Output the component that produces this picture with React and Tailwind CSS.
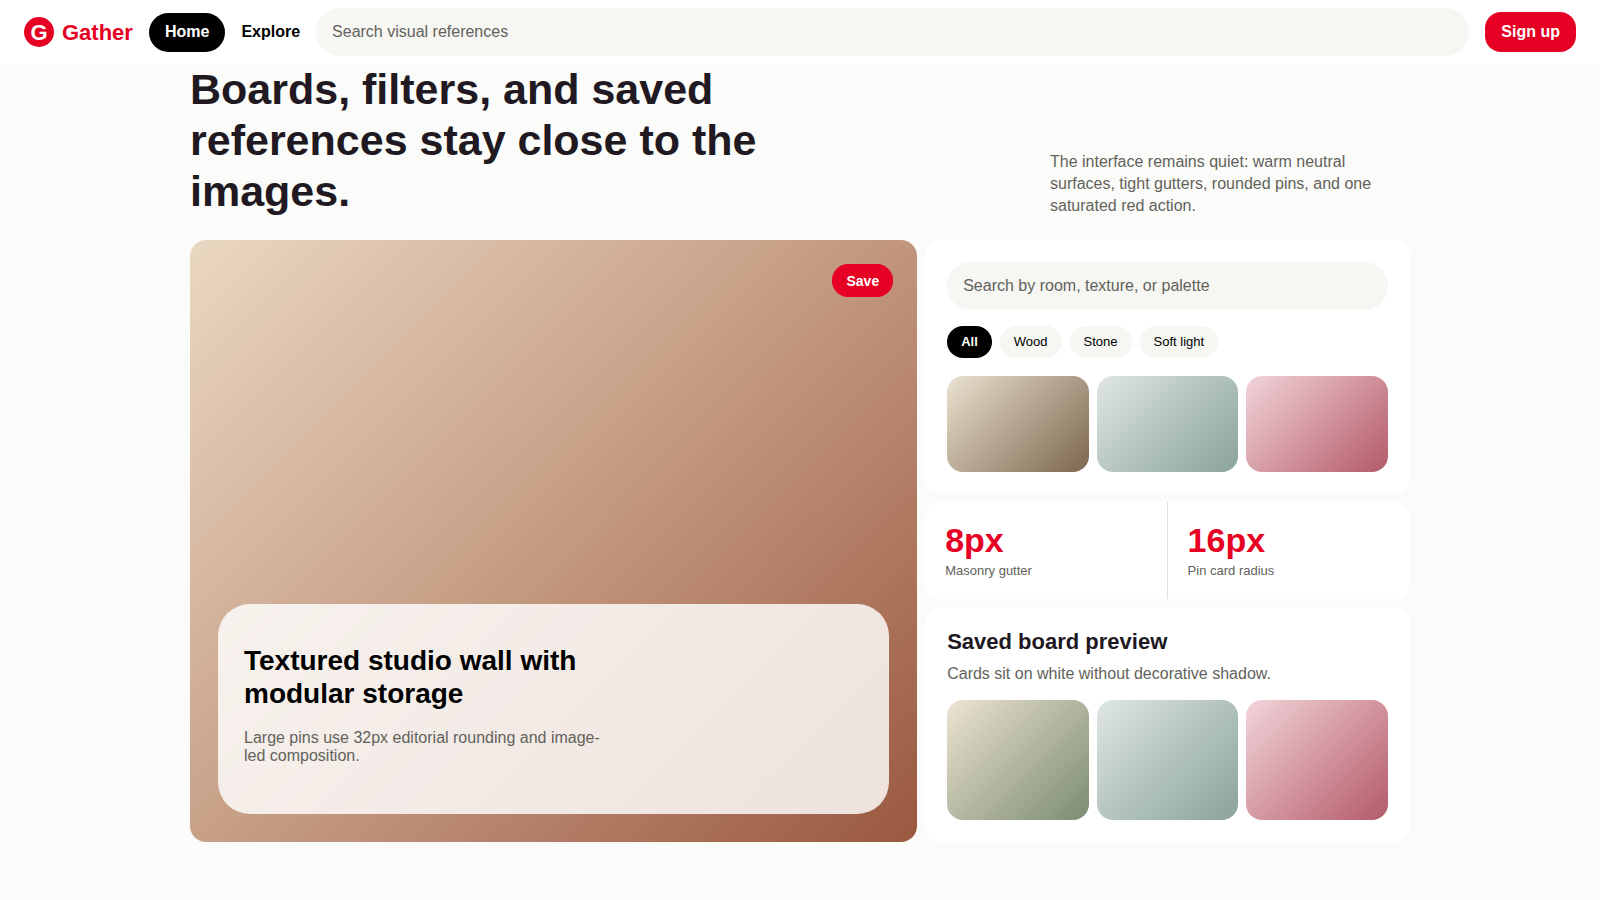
import { useState } from 'react'

const FILTERS = ['All', 'Wood', 'Stone', 'Soft light']

const STATS = [
  { value: '8px', label: 'Masonry gutter' },
  { value: '16px', label: 'Pin card radius' },
]

const PALETTE_PINS = [
  'from-[#ebe3d1] to-[#7d6850]',
  'from-[#dfe6e3] to-[#8aa39b]',
  'from-[#f1d5db] to-[#b25a69]',
]

const BOARD_PINS = [
  'from-[#ede4d3] to-[#7c8c73]',
  'from-[#dfe6e3] to-[#8aa39b]',
  'from-[#f1d5db] to-[#b25a69]',
]

function Header() {
  return (
    <header className="flex items-center gap-4 h-16 px-6 bg-white">
      <a href="#" className="flex items-center gap-2 text-[22px] font-bold text-[#e60023]">
        <span className="flex items-center justify-center w-[30px] h-[30px] rounded-full bg-[#e60023] text-white">G</span>
        Gather
      </a>
      <nav className="flex items-center gap-4 text-base font-bold text-black">
        <a href="#" className="flex items-center h-[39px] px-4 rounded-[20px] bg-black text-white">Home</a>
        <a href="#explore">Explore</a>
      </nav>
      <input
        type="search"
        aria-label="Search visual references"
        placeholder="Search visual references"
        className="flex-1 min-w-0 h-12 px-4 rounded-3xl bg-[#f6f6f3] text-base text-black placeholder:text-[#62625b] outline-none"
      />
      <button className="h-10 px-4 rounded-2xl bg-[#e60023] text-base font-bold text-white">Sign up</button>
    </header>
  )
}

function PinRow({ pins, tall }) {
  return (
    <div className="grid grid-cols-3 gap-2">
      {pins.map(pin => (
        <div key={pin} className={`rounded-2xl bg-linear-135 ${pin} ${tall ? 'h-[120px]' : 'h-24'}`} />
      ))}
    </div>
  )
}

function FeaturedPin() {
  return (
    <article className="relative flex flex-col justify-end p-7 rounded-2xl bg-linear-135 from-[#ead8c3] via-[#c49b82] to-[#9a5840]">
      <button className="absolute top-6 right-6 h-[33px] px-[14px] rounded-2xl bg-[#e60023] text-sm font-bold text-white">Save</button>
      <div className="px-[26px] pt-10 pb-[49px] rounded-4xl bg-white/82">
        <h3 className="max-w-[370px] text-[28px] leading-[33px] font-bold text-black">Textured studio wall with modular storage</h3>
        <p className="mt-[19px] max-w-[370px] text-base leading-[18px] text-[#62625b]">
          Large pins use 32px editorial rounding and image-led composition.
        </p>
      </div>
    </article>
  )
}

function SearchCard() {
  const [active, setActive] = useState('All')

  return (
    <section className="p-[22px] rounded-2xl bg-white">
      <input
        type="search"
        aria-label="Search by room, texture, or palette"
        placeholder="Search by room, texture, or palette"
        className="block w-full h-12 px-4 rounded-3xl bg-[#f6f6f3] text-base text-black placeholder:text-[#62625b] outline-none"
      />
      <div className="flex flex-wrap gap-2 mt-4 mb-[18px]">
        {FILTERS.map(name => (
          <button
            key={name}
            onClick={() => setActive(name)}
            className={`h-8 px-[14px] rounded-2xl text-[13px] ${name === active ? 'bg-black text-white font-bold' : 'bg-[#f6f6f3] text-black'}`}
          >
            {name}
          </button>
        ))}
      </div>
      <PinRow pins={PALETTE_PINS} />
    </section>
  )
}

export default function App() {
  return (
    <div className="min-h-screen bg-[#fbfbf9] font-['Liberation_Sans',Arial,sans-serif] text-[#211922]">
      <Header />

      <main className="max-w-[1220px] mx-auto pb-14">
        <div className="flex items-end justify-between gap-8 mb-[23px]">
          <h2 className="max-w-[640px] text-[43px] leading-[51px] font-bold">
            Boards, filters, and saved references stay close to the images.
          </h2>
          <p className="w-[360px] text-base leading-[22px] text-[#62625b]">
            The interface remains quiet: warm neutral surfaces, tight gutters, rounded pins, and one saturated red action.
          </p>
        </div>

        <div className="grid grid-cols-[3fr_2fr] gap-2">
          <FeaturedPin />

          <div className="grid gap-2">
            <SearchCard />

            {/* Stats */}
            <section className="grid grid-cols-2 divide-x divide-[#e0e0dc] rounded-2xl bg-white">
              {STATS.map(({ value, label }) => (
                <div key={label} className="p-5">
                  <div className="text-[34px] leading-[37px] font-bold text-[#e60023]">{value}</div>
                  <div className="mt-1 text-[13px] leading-4 text-[#62625b]">{label}</div>
                </div>
              ))}
            </section>

            {/* Board preview */}
            <section className="p-[22px] rounded-2xl bg-white">
              <h3 className="text-[22px] leading-[26px] font-bold">Saved board preview</h3>
              <p className="mt-2 mb-[15px] text-base leading-[22px] text-[#62625b]">Cards sit on white without decorative shadow.</p>
              <PinRow pins={BOARD_PINS} tall />
            </section>
          </div>
        </div>
      </main>
    </div>
  )
}
